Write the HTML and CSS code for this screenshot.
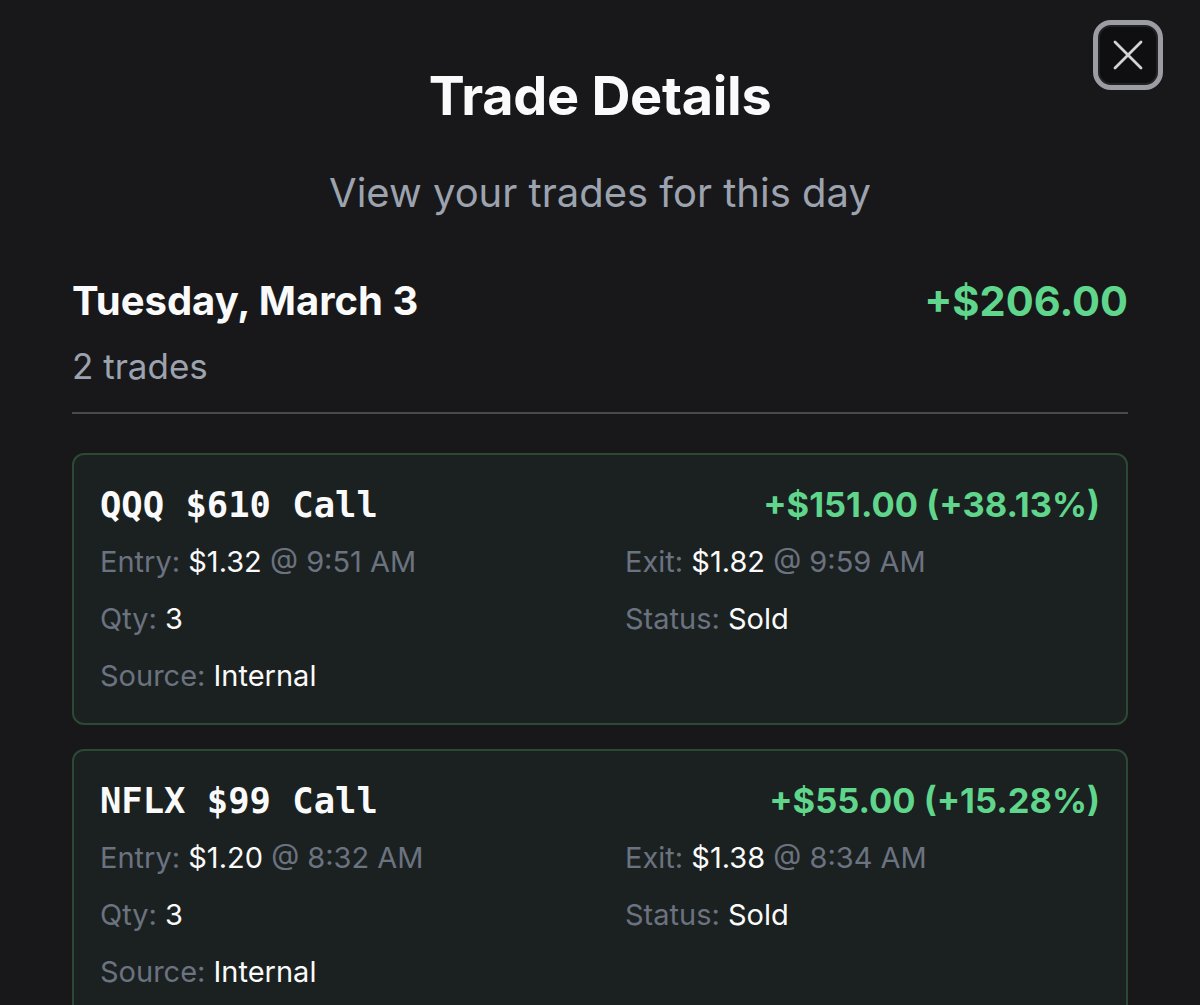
FILE: index.html
```html
<!DOCTYPE html>
<html lang="en">
<head>
    <meta charset="UTF-8">
    <meta name="viewport" content="width=device-width, initial-scale=1.0">
    <title>Trade Details</title>
    <link rel="stylesheet" href="styles.css">
</head>
<body>
    <div class="modal">
        <button class="close" aria-label="Close">
            <svg viewBox="0 0 30 30" width="30" height="30">
                <path d="M2 2 L28 28 M28 2 L2 28" stroke="#d4d4d8" stroke-width="2.8" stroke-linecap="round" fill="none"/>
            </svg>
        </button>
        <header class="head">
            <h1>Trade Details</h1>
            <p class="sub">View your trades for this day</p>
        </header>
        <section class="day">
            <div class="day-top">
                <div>
                    <h2>Tuesday, March 3</h2>
                    <p class="count">2 trades</p>
                </div>
                <div class="day-pnl">+$206.00</div>
            </div>
        </section>
        <div class="trades">
            <div class="card">
                <div class="card-top">
                    <span class="ticker">QQQ $610 Call</span>
                    <span class="pnl">+$151.00 (+38.13%)</span>
                </div>
                <div class="fields">
                    <div class="field"><span class="lbl">Entry:</span> <span class="val">$1.32</span> <span class="lbl">@ 9:51 AM</span></div>
                    <div class="field"><span class="lbl">Exit:</span> <span class="val">$1.82</span> <span class="lbl">@ 9:59 AM</span></div>
                    <div class="field"><span class="lbl">Qty:</span> <span class="val">3</span></div>
                    <div class="field"><span class="lbl">Status:</span> <span class="val">Sold</span></div>
                    <div class="field"><span class="lbl">Source:</span> <span class="val">Internal</span></div>
                </div>
            </div>
            <div class="card">
                <div class="card-top">
                    <span class="ticker">NFLX $99 Call</span>
                    <span class="pnl">+$55.00 (+15.28%)</span>
                </div>
                <div class="fields">
                    <div class="field"><span class="lbl">Entry:</span> <span class="val">$1.20</span> <span class="lbl">@ 8:32 AM</span></div>
                    <div class="field"><span class="lbl">Exit:</span> <span class="val">$1.38</span> <span class="lbl">@ 8:34 AM</span></div>
                    <div class="field"><span class="lbl">Qty:</span> <span class="val">3</span></div>
                    <div class="field"><span class="lbl">Status:</span> <span class="val">Sold</span></div>
                    <div class="field"><span class="lbl">Source:</span> <span class="val">Internal</span></div>
                </div>
            </div>
        </div>
    </div>
</body>
</html>
```

FILE: styles.css
```css
body {
    margin: 0;
    background: #18181b;
    color: #fafafa;
    font-family: 'Inter', 'Liberation Sans', sans-serif;
    overflow: hidden;
}
.modal {
    position: relative;
    padding: 0 72px;
}
.close {
    position: absolute;
    top: 20px;
    right: 37px;
    width: 70px;
    height: 70px;
    border: 5px solid #9c9ca3;
    border-radius: 18px;
    background: #0f0f11;
    box-shadow: inset 0 0 0 2px #222226;
    display: flex;
    align-items: center;
    justify-content: center;
    padding: 0;
}
.head {
    text-align: center;
    padding-top: 64px;
}
h1 {
    margin: 0;
    font-size: 54px;
    line-height: 64px;
    font-weight: 700;
    letter-spacing: -0.3px;
}
.sub {
    margin: 41px 0 0;
    font-size: 40px;
    line-height: 48px;
    color: #9ca3af;
}
.day {
    margin-top: 60px;
    padding-bottom: 24px;
    border-bottom: 2px solid #48484e;
}
.day-top {
    display: flex;
    justify-content: space-between;
    align-items: flex-start;
}
h2 {
    margin: 0;
    font-size: 40px;
    line-height: 48px;
    font-weight: 700;
}
.count {
    margin: 19px 0 0;
    font-size: 35px;
    line-height: 44px;
    color: #9ca3af;
}
.day-pnl {
    font-size: 41.5px;
    line-height: 48px;
    font-weight: 700;
    color: #5fd68b;
}
.trades {
    margin-top: 39px;
    display: flex;
    flex-direction: column;
    gap: 24px;
}
.card {
    background: #1b2120;
    border: 2px solid #2c4a33;
    border-radius: 12px;
    padding: 28px 26px 19px;
}
.card-top {
    display: flex;
    justify-content: space-between;
    align-items: baseline;
    line-height: 44px;
}
.ticker {
    font-family: 'DejaVu Sans Mono', 'Liberation Mono', monospace;
    font-size: 35.5px;
    font-weight: 700;
}
.pnl {
    font-size: 34.5px;
    font-weight: 700;
    color: #5fd68b;
}
.fields {
    margin-top: 6px;
    display: grid;
    grid-template-columns: 1fr 1fr;
    column-gap: 50px;
}
.field {
    font-size: 29px;
    line-height: 57px;
    white-space: nowrap;
}
.lbl {
    color: #6b7280;
}
.val {
    color: #fafafa;
}
```
